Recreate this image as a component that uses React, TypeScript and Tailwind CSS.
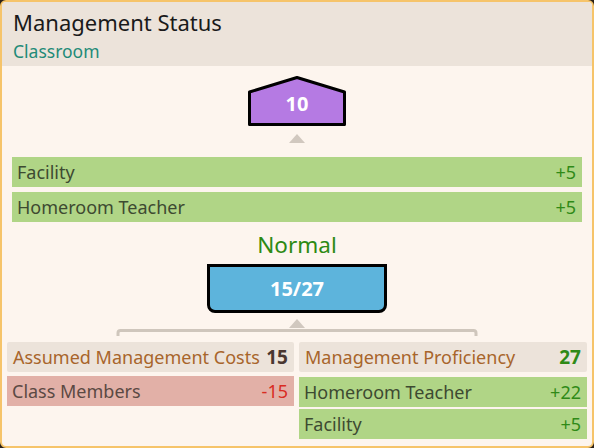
import React from 'react';

const font = { fontFamily: '"Noto Sans", "Open Sans", sans-serif' };

function StatRow({ label, value, tone }: { label: string; value: string; tone: 'green' | 'red' | 'head-cost' | 'head-prof' }) {
  if (tone === 'head-cost' || tone === 'head-prof') {
    return (
      <div className="flex h-[30px] items-center justify-between rounded-[2px] bg-[#ece3da] pl-[6px] pr-[6px]">
        <span className="text-[18px] text-[#a8652b]">{label}</span>
        <span className={`text-[19px] font-bold ${tone === 'head-cost' ? 'text-[#4a3731]' : 'text-[#2f8a17]'}`}>{value}</span>
      </div>
    );
  }
  const red = tone === 'red';
  return (
    <div className={`flex h-[30px] items-center justify-between pl-[5px] pr-[6px] ${red ? 'bg-[#e2b0a7]' : 'bg-[#b0d586]'}`}>
      <span className={`text-[18px] ${red ? 'text-[#5b4943]' : 'text-[#3d4a31]'}`}>{label}</span>
      <span className={`text-[18px] ${red ? 'text-[#d92b22]' : 'text-[#2f8a17]'}`}>{value}</span>
    </div>
  );
}

function Arrow() {
  return (
    <svg width="16" height="9" viewBox="0 0 16 9" className="mx-auto block">
      <polygon points="8,0 16,9 0,9" fill="#d1c8bf" />
    </svg>
  );
}

export default function App() {
  return (
    <div className="h-[448px] w-[594px] bg-[#2b2118]" style={font}>
      <div className="flex h-full flex-col overflow-hidden rounded-[6px] border-2 border-[#f6c46a] bg-[#fdf5ee]">
        {/* Header */}
        <div className="h-[64px] shrink-0 bg-[#ece3da] pl-[11px] pt-[7px]">
          <div className="text-[22px] leading-[26px] text-[#1a1a1a]">Management Status</div>
          <div className="mt-[5px] text-[17.5px] leading-[22px] text-[#1f8b78]">Classroom</div>
        </div>

        {/* Upper part */}
        <div className="px-[10px]">
          <div className="relative mx-auto mt-[10px] h-[51px] w-[100px]">
            <svg width="100" height="51" viewBox="0 0 100 51" className="absolute inset-0">
              <polygon
                points="2.5,16 50,1.5 97.5,16 97.5,48.5 2.5,48.5"
                fill="#b57ae3"
                stroke="#000"
                strokeWidth="3"
                strokeLinejoin="round"
              />
            </svg>
            <div className="absolute inset-x-0 top-[15px] text-center text-[20px] font-bold leading-[26px] text-white">10</div>
          </div>
          <div className="mt-[7px]">
            <Arrow />
          </div>
          <div className="mt-[14px] flex flex-col gap-[5px]">
            <StatRow label="Facility" value="+5" tone="green" />
            <StatRow label="Homeroom Teacher" value="+5" tone="green" />
          </div>
          <div className="mt-[9px] text-center text-[22.5px] leading-[28px] text-[#2d8a13]">Normal</div>
          <div className="mx-auto mt-[5px] flex h-[49px] w-[180px] items-center justify-center rounded-b-[8px] border-[3px] border-black bg-[#5db4dc] text-[20px] font-bold text-white">
            15/27
          </div>
          <div className="mt-[6px]">
            <Arrow />
          </div>
          <svg width="362" height="7" viewBox="0 0 362 7" className="mx-auto mt-[1px] block">
            <path d="M2 7 V4 Q2 1.5 4.5 1.5 H357.5 Q360 1.5 360 4 V7" fill="none" stroke="#cfc6bc" strokeWidth="3" />
          </svg>
        </div>

        {/* Bottom columns */}
        <div className="mt-[6px] flex gap-[5px] pl-[5px]">
          <div className="flex w-[287px] flex-col gap-[4px]">
            <StatRow label="Assumed Management Costs" value="15" tone="head-cost" />
            <StatRow label="Class Members" value="-15" tone="red" />
          </div>
          <div className="flex w-[288px] flex-col">
            <StatRow label="Management Proficiency" value="27" tone="head-prof" />
            <div className="mt-[5px]">
              <StatRow label="Homeroom Teacher" value="+22" tone="green" />
            </div>
            <div className="mt-[2px]">
              <StatRow label="Facility" value="+5" tone="green" />
            </div>
          </div>
        </div>
      </div>
    </div>
  );
}
